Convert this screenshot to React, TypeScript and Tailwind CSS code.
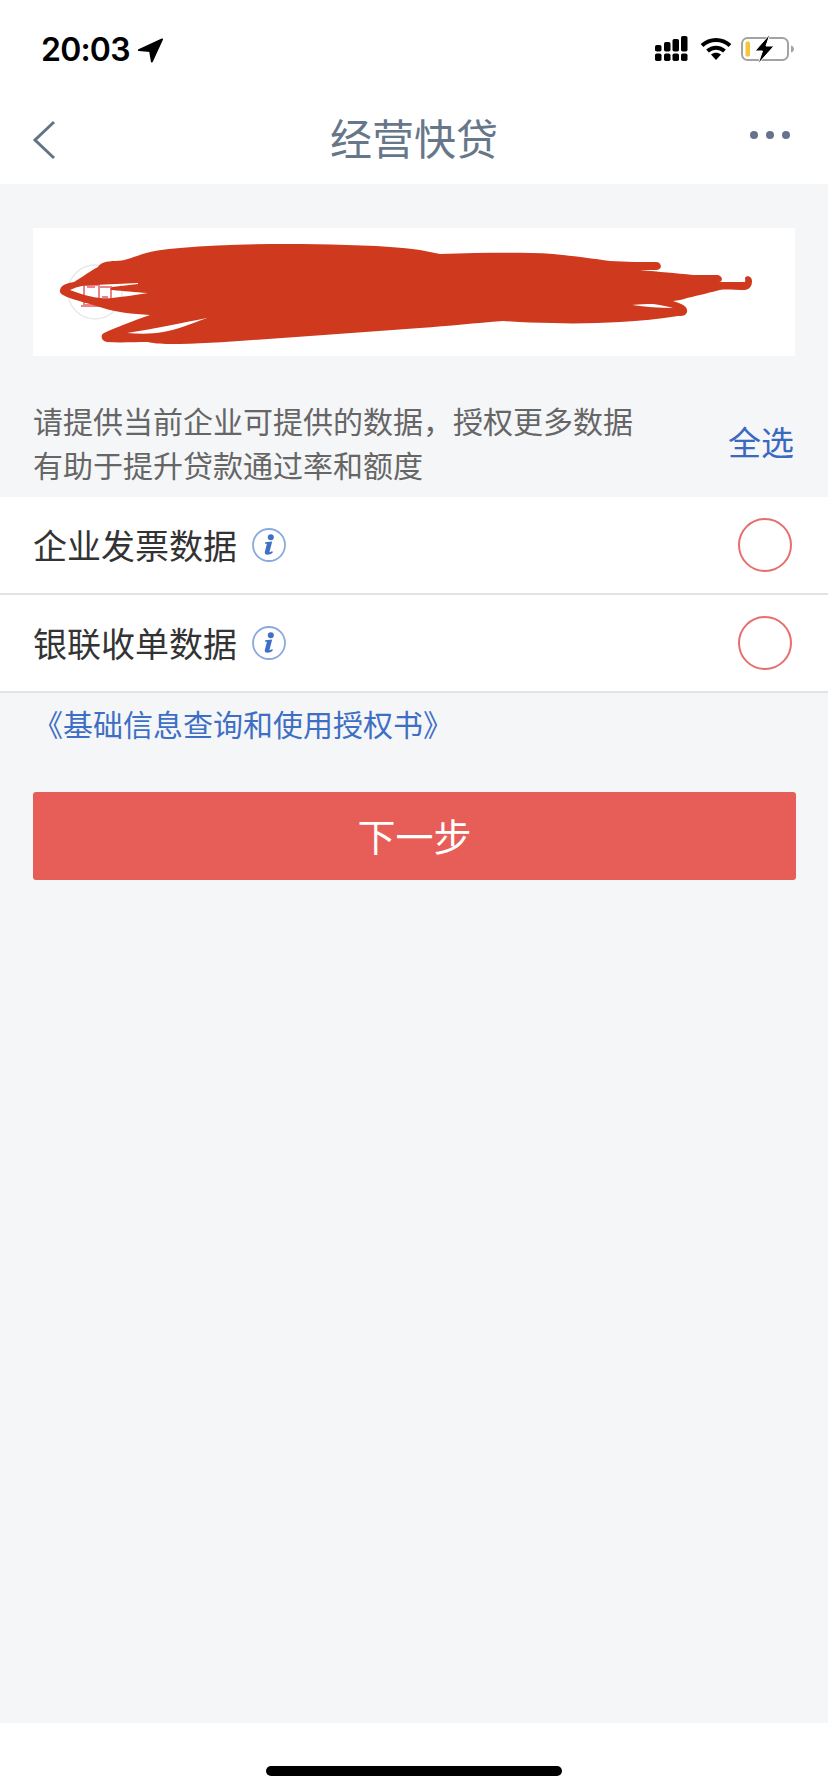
const CJK = "font-['Noto_Sans_CJK_SC','Noto_Sans',sans-serif]";

function SignalIcon() {
  const cols = [
    { x: 0, top: 9 },
    { x: 9, top: 6 },
    { x: 17.5, top: 3 },
    { x: 26, top: 0 },
  ];
  return (
    <svg width="33" height="26" viewBox="0 0 33 26" className="block">
      {cols.map((c) => (
        <g key={c.x} fill="#000">
          <rect x={c.x} y={c.top} width="6.5" height={15.5 - c.top} rx="1.8" />
          <rect x={c.x} y="17.5" width="6.5" height="7.5" rx="1.8" />
        </g>
      ))}
    </svg>
  );
}

function WifiIcon() {
  return (
    <svg width="32" height="24" viewBox="0 0 32 24" className="block">
      <path d="M2 8.5C10 1 22 1 30 8.5" fill="none" stroke="#000" strokeWidth="4" />
      <path d="M7.5 14C12.5 9.5 19.5 9.5 24.5 14" fill="none" stroke="#000" strokeWidth="4" />
      <path d="M11 17.5C14 15 18 15 21 17.5L16 23Z" fill="#000" />
    </svg>
  );
}

function BatteryIcon() {
  return (
    <svg width="54" height="30" viewBox="0 0 54 30" className="block">
      <rect x="1" y="4" width="46" height="22" rx="5.5" fill="none" stroke="#a3a3a3" strokeWidth="2" />
      <path d="M50 11.5C52 12 53 13.5 53 15C53 16.5 52 18 50 18.5Z" fill="#a3a3a3" />
      <rect x="4.5" y="7.5" width="4.5" height="15" rx="1.5" fill="#f4c63d" />
      <path d="M29 0L14 17H21.5L17 30L33 12H25Z" fill="#000" stroke="#fff" strokeWidth="1" strokeLinejoin="round" />
    </svg>
  );
}

function InfoIcon() {
  return (
    <svg width="34" height="34" viewBox="0 0 34 34" className="block shrink-0">
      <circle cx="17" cy="17" r="16" fill="none" stroke="#8aaade" strokeWidth="1.8" />
      <circle cx="18.8" cy="9.3" r="3" fill="#3f70c6" />
      <path d="M13.2 14.2L20.2 13.4L17.6 23.4C17.4 24.4 18.2 24.5 20.2 23L20.8 24.4C18 27 12 28 12.8 24L14.8 16.2C14.9 15.6 14.4 15.6 13.1 15.7Z" fill="#3f70c6" />
    </svg>
  );
}

function Scribble() {
  return (
    <svg
      className="absolute left-0 top-0"
      width="763"
      height="128"
      viewBox="33 228 763 128"
    >
      <circle cx="95" cy="292" r="27" fill="none" stroke="#e9e9e9" strokeWidth="1.5" />
      <g fill="none" stroke="#e9858a" strokeWidth="2">
        <rect x="84" y="285" width="15" height="20" />
        <rect x="99" y="287" width="12" height="18" />
        <path d="M81 306H108M87 287H95M102 297H108" />
      </g>
      <path
        fillRule="evenodd"
        fill="#cf3a1e"
        d="M60 290C61 285 67 283 74 282C84 276 90 271 98 267C100 263 106 261 116 261C124 261 130 258 137 256C150 251 165 249 180 248C215 245 250 244 287 244C325 244 370 245 403 248C410 249 415 249 420 250L440 254C480 253 520 252 553 254C575 256 595 259 610 261C625 262 645 262 656 262C662 262 663 270 656 270H640C660 272 675 273 693 275C702 275 712 275 718 275C723 276 723 282 719 282L744 282C746 282 745 279 745 278C746 275 752 276 752 281C752 286 750 289 745 290C735 290 725 289 720 290C712 292 700 295 687 298C682 300 678 300 673 301C682 304 688 306 687 312C686 316 682 316 678 316C660 319 640 321 620 322C600 323 575 324 553 323C535 323 520 322 503 321C475 323 450 326 420 328C365 332 310 336 253 340C225 342 195 344 170 344C160 344 152 343 147 342C135 342 120 343 107 342C101 341 100 335 104 333C115 328 130 322 150 315C132 314 116 312 103 308C90 304 75 300 67 297C62 295 59 293 60 290ZM70 290C78 286 86 285 94 285L138 283L138 284L112 287C110 288 110 290 112 290C124 291 134 292 148 293C135 295 122 297 112 298C100 299 88 297 70 290ZM127 333C155 329 185 322 207 318C190 324 177 330 163 332C153 334 140 334 127 333ZM632 305C640 304 645 304 653 304C660 305 667 306 673 308C660 308 645 307 632 305Z"
      />
    </svg>
  );
}

function Row({ label }: { label: string }) {
  return (
    <div className="flex h-[98px] items-center border-b-2 border-[#e3e3e3] bg-white pl-[33px] pr-[36px]">
      <span className="text-[34px] leading-[44px] text-[#333333]">{label}</span>
      <span className="ml-[15px]">
        <InfoIcon />
      </span>
      <span className="ml-auto h-[54px] w-[54px] rounded-full border-[2.5px] border-[#e66e6b]" />
    </div>
  );
}

export default function App() {
  return (
    <div className={`flex h-[1792px] w-[828px] flex-col bg-[#f5f6f8] ${CJK}`}>
      <header className="h-[184px] shrink-0 bg-white">
        <div className="flex h-[98px] items-center justify-between pl-[41px] pr-[33px]">
          <div className="flex items-center gap-[7px] pt-[2px]">
            <span className="font-['Inter',sans-serif] text-[32px] font-semibold leading-none tracking-[-0.8px] text-black">
              20:03
            </span>
            <svg width="26" height="25" viewBox="0 0 28 26" className="block">
              <path d="M27 1L2 12.5L14 13.5L16 25Z" fill="#000" stroke="#000" strokeWidth="2" strokeLinejoin="round" />
            </svg>
          </div>
          <div className="flex items-center gap-[9px]">
            <span className="mr-[3px]">
              <SignalIcon />
            </span>
            <WifiIcon />
            <BatteryIcon />
          </div>
        </div>
        <div className="grid h-[86px] grid-cols-[1fr_auto_1fr] items-start px-[32px] pt-[9px]">
          <svg width="24" height="40" viewBox="0 0 24 40" className="mt-[13px] block justify-self-start">
            <path d="M22 2L3 20L22 38" fill="none" stroke="#647487" strokeWidth="3" />
          </svg>
          <h1 className="text-[42px] font-normal leading-[60px] text-[#667789]">经营快贷</h1>
          <div className="mr-[6px] mt-[24px] flex gap-[8px] justify-self-end">
            <span className="h-[8px] w-[8px] rounded-full bg-[#64748b]" />
            <span className="h-[8px] w-[8px] rounded-full bg-[#64748b]" />
            <span className="h-[8px] w-[8px] rounded-full bg-[#64748b]" />
          </div>
        </div>
      </header>

      <main className="flex-1">
        <div className="relative mx-[33px] mt-[44px] h-[128px] overflow-hidden bg-white">
          <Scribble />
        </div>
        <div className="flex items-center justify-between pb-[11px] pl-[33px] pr-[34px] pt-[42px]">
          <p className="text-[30px] leading-[44px] text-[#666666]">
            请提供当前企业可提供的数据，授权更多数据
            <br />
            有助于提升贷款通过率和额度
          </p>
          <span className="-translate-y-[1px] text-[33px] leading-[44px] text-[#3a69bf]">全选</span>
        </div>
        <Row label="企业发票数据" />
        <Row label="银联收单数据" />
        <p className="mt-[8px] pl-[33px] text-[30px] leading-[44px] text-[#3f6fc4]">《基础信息查询和使用授权书》</p>
        <button className="mx-[33px] mt-[47px] flex h-[88px] w-[763px] items-center justify-center rounded-[3px] bg-[#e75d58] pb-[3px] text-[38px] text-white">
          下一步
        </button>
      </main>

      <footer className="flex h-[69px] shrink-0 justify-center bg-white pt-[43px]">
        <div className="h-[10px] w-[296px] rounded-full bg-black" />
      </footer>
    </div>
  );
}
